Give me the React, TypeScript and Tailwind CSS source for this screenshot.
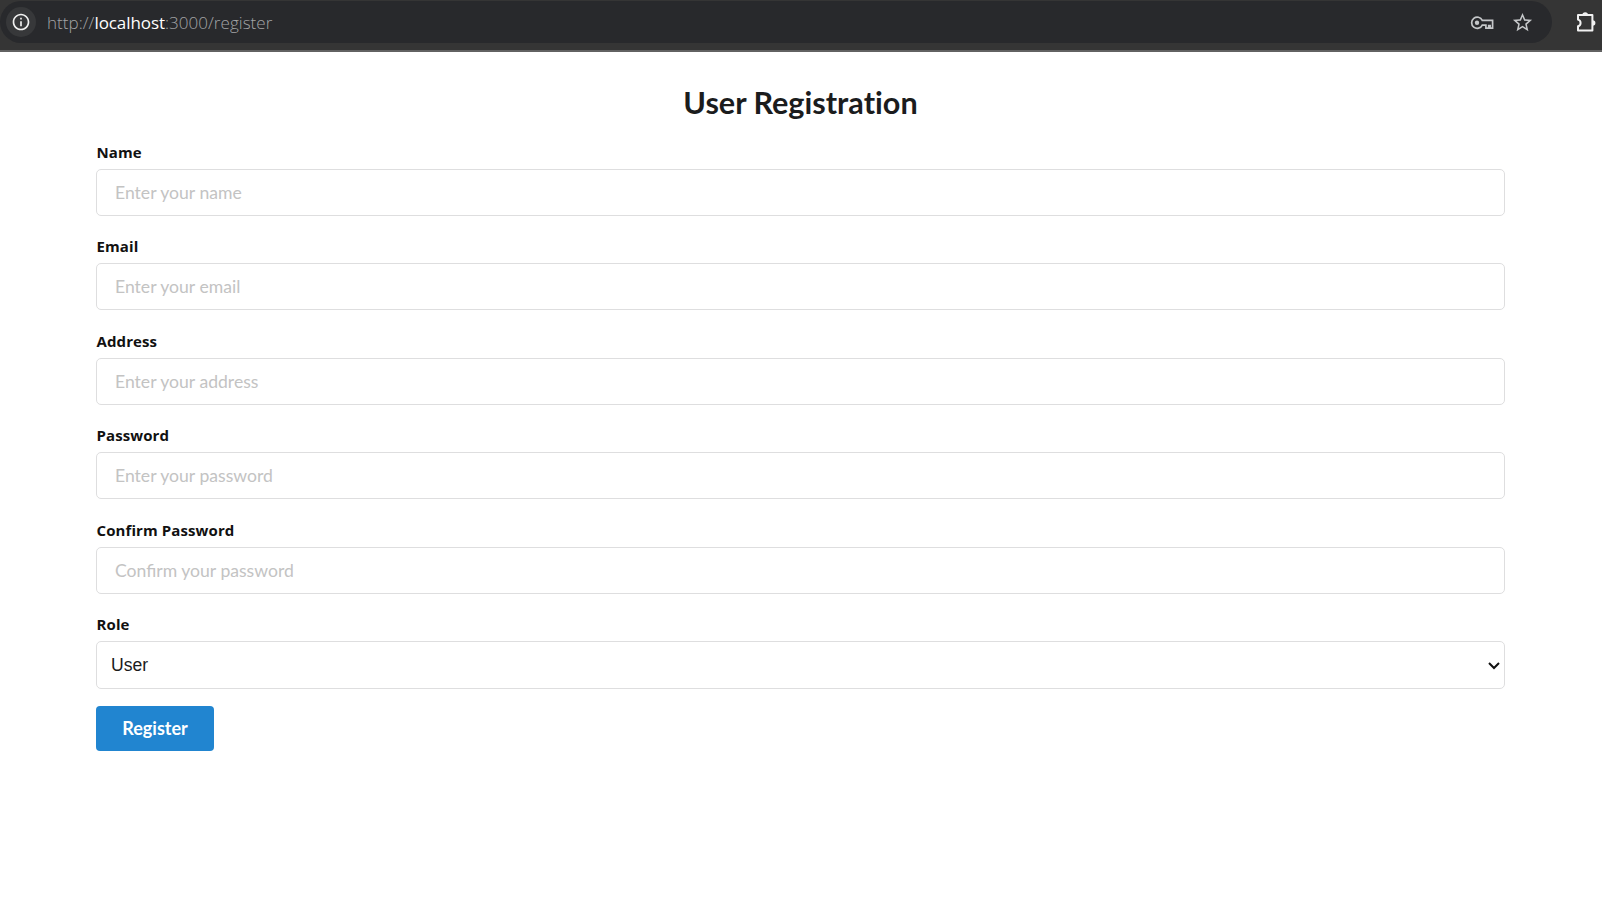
import { MdInfoOutline, MdStarBorder } from 'react-icons/md';

type FieldProps = { id: string; label: string; placeholder: string; type?: string };

const labelClass = "block h-[19px] w-fit pl-[0.5px] font-['Open_Sans','Noto_Sans',sans-serif] text-[15px] tracking-[0.1px] leading-[17px] font-bold text-[#111111]";

const fields: FieldProps[] = [
  { id: 'name', label: 'Name', placeholder: 'Enter your name' },
  { id: 'email', label: 'Email', placeholder: 'Enter your email', type: 'email' },
  { id: 'address', label: 'Address', placeholder: 'Enter your address' },
  { id: 'password', label: 'Password', placeholder: 'Enter your password', type: 'password' },
  { id: 'confirm', label: 'Confirm Password', placeholder: 'Confirm your password', type: 'password' },
];

function Field({ id, label, placeholder, type = 'text' }: FieldProps) {
  return (
    <div className="h-[94.5px]">
      <label htmlFor={id} className={labelClass}>{label}</label>
      <input
        id={id}
        type={type}
        placeholder={placeholder}
        className="mt-[6px] block h-[47px] w-full rounded-[5px] border border-[#dededf] bg-white px-[18px] font-['Lato',sans-serif] text-[17.6px] text-[#222222] outline-none placeholder:text-[#c3c3c3]"
      />
    </div>
  );
}

function KeyIcon() {
  return (
    <svg width="24" height="16" viewBox="0 0 24 16" fill="none" stroke="#c5c7c9" strokeWidth="1.7">
      <path d="M12.3 5.3A5.6 5.6 0 1 0 12.3 10.1H15.9V13.2H18.7V10.6H20.1V13.2H22.6V5.3Z" />
      <circle cx="7" cy="7.7" r="2.2" fill="#c5c7c9" stroke="none" />
    </svg>
  );
}

function PuzzleIcon() {
  return (
    <svg width="22" height="23" viewBox="0 0 22 23">
      <path d="M3 4H17.4V19.6H3V15.2A3.4 3.4 0 0 0 3 8.6Z" fill="none" stroke="#f1f1f1" strokeWidth="2" strokeLinejoin="round" />
      <path d="M7.4 4A2.8 2.8 0 0 1 13 4ZM17.6 9.2A2.8 2.8 0 0 1 17.6 14.8Z" fill="#f1f1f1" />
    </svg>
  );
}

function BrowserBar() {
  return (
    <header className="flex h-[52px] items-start border-b-2 border-[#626262] bg-[#353535] pt-px">
      <div className="flex h-[42px] w-[1552px] items-center rounded-full bg-[#28292c] pr-[18px] pl-[6px]">
        <span className="flex size-[30px] items-center justify-center rounded-full bg-[#37383a]">
          <MdInfoOutline className="size-5 text-[#f1f1f1]" />
        </span>
        <span className="ml-[11px] pt-[2px] font-['Open_Sans','Noto_Sans',sans-serif] text-[17px] font-light tracking-[0.04px] text-[#a3a4a6]">
          http://<span className="font-normal tracking-[-0.08px] text-white">localhost</span>:3000/register
        </span>
        <span className="ml-auto flex items-center gap-[17px] pt-px">
          <KeyIcon />
          <MdStarBorder className="size-[23px] text-[#c5c7c9]" />
        </span>
      </div>
      <span className="mt-[9.5px] ml-[23px]">
        <PuzzleIcon />
      </span>
    </header>
  );
}

export default function App() {
  return (
    <div className="flex h-[917px] w-[1602px] flex-col overflow-hidden bg-white">
      <BrowserBar />
      <main className="pr-[97px] pl-[96px]">
        <h1 className="mt-[32px] h-[38px] text-center font-['Lato',sans-serif] text-[30.6px] leading-[38px] font-bold text-[#1b1c1d] [font-variant-ligatures:none]">User Registration</h1>
        <form className="mt-[21.75px]" onSubmit={(e) => e.preventDefault()}>
          {fields.map((f) => (
            <Field key={f.id} {...f} />
          ))}
          <label htmlFor="role" className={labelClass}>Role</label>
          <div className="relative mt-[6px]">
            <select
              id="role"
              className="block h-[48px] w-full appearance-none rounded-[5px] border border-[#dededf] bg-white px-[14px] font-['Liberation_Sans',Arial,sans-serif] text-[17.6px] text-[#1b1b1b] outline-none"
            >
              <option>User</option>
            </select>
            <svg className="pointer-events-none absolute top-[21px] right-[5px]" width="12" height="8" viewBox="0 0 12 8" fill="none" stroke="#111111" strokeWidth="2">
              <path d="M1 1L6 6L11 1" />
            </svg>
          </div>
          <button type="submit" className="mt-[17px] block h-[45px] w-[118px] rounded-[4px] bg-[#2185d0] font-['Lato',sans-serif] text-[18px] font-bold text-white">Register</button>
        </form>
      </main>
    </div>
  );
}
